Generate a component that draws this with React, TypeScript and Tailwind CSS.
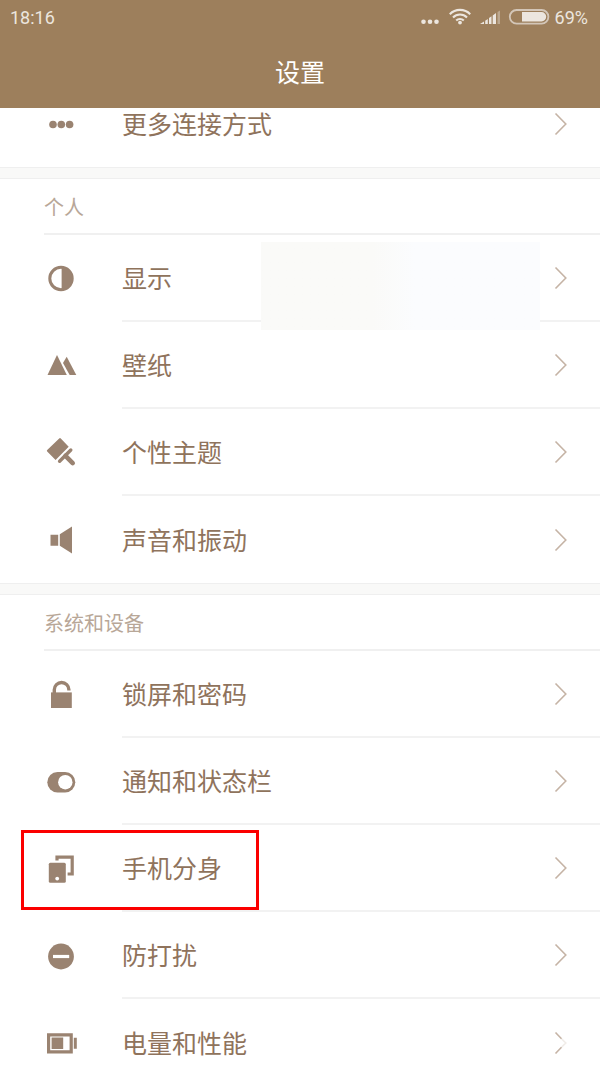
import type { ReactNode } from 'react';

interface SettingItem {
    label: string;
    icon: ReactNode;
    marked?: boolean;
    covered?: boolean;
    faded?: boolean;
}

interface SectionProps {
    title: string;
    items: SettingItem[];
}

const moreIcon = (
    <>
        <circle cx="8" cy="16.5" r="3.8" />
        <circle cx="16.3" cy="16.5" r="3.8" />
        <circle cx="24.6" cy="16.5" r="3.8" />
    </>
);

const displayIcon = (
    <>
        <circle cx="16" cy="15.5" r="11.2" fill="none" stroke="currentColor" strokeWidth="3" />
        <path d="M16.6 4.5a11 11 0 0 1 0 22z" />
    </>
);

const wallpaperIcon = (
    <>
        <path d="M2.5 25 12 5l9.8 20z" />
        <path d="M18 13.1 21.7 6.8 31.3 25h-6.6z" />
    </>
);

const themeIcon = (
    <>
        <path d="M14.2 1.4q.8-.8 1.6 0l7.9 8.4L10.6 23 2.2 14.6q-.8-.8 0-1.6z" />
        <path d="M25.8 13 14.6 24.3" fill="none" stroke="currentColor" strokeWidth="3.4" strokeLinecap="round" />
        <path d="m20.5 18.8 7.2 7.3" fill="none" stroke="currentColor" strokeWidth="4.6" strokeLinecap="round" />
    </>
);

const soundIcon = (
    <>
        <path d="M5.5 10.7h7.7v11.1H5.5zM14.8 10.2 27 2.6v26.8l-12.2-7.7z" />
    </>
);

const lockIcon = (
    <>
        <path d="M6 13.4h20.8V29H6z" />
        <path d="M9.3 14.4v-3.6a7.3 7.3 0 0 1 14.6 0v.8" fill="none" stroke="currentColor" strokeWidth="3.4" />
    </>
);

const toggleIcon = (
    <>
        <rect x="2.3" y="6" width="28" height="20.4" rx="10.2" />
        <circle cx="20.3" cy="16.2" r="7.2" fill="#fff" />
    </>
);

const cloneIcon = (
    <>
        <path d="M12 7.6V4.2h15.2V21h-4.6" fill="none" stroke="currentColor" strokeWidth="3.2" />
        <rect x="3.8" y="9.8" width="17" height="20" rx="1.5" />
        <circle cx="12.2" cy="25.6" r="1.9" fill="#fff" />
    </>
);

const disturbIcon = (
    <>
        <circle cx="16" cy="16.5" r="12.9" />
        <path d="M8 14.9h16.2v3.2H8z" fill="#fff" />
    </>
);

const batteryIcon = (
    <>
        <path d="M3.6 7.8h22.6v17H3.6z" fill="none" stroke="currentColor" strokeWidth="3.2" />
        <path d="M6.6 10.5h11.6v11.6H6.6zM28.8 10.7h3v11h-3z" />
    </>
);

const personalItems: SettingItem[] = [
    { label: '显示', icon: displayIcon, covered: true },
    { label: '壁纸', icon: wallpaperIcon },
    { label: '个性主题', icon: themeIcon },
    { label: '声音和振动', icon: soundIcon },
];

const systemItems: SettingItem[] = [
    { label: '锁屏和密码', icon: lockIcon },
    { label: '通知和状态栏', icon: toggleIcon },
    { label: '手机分身', icon: cloneIcon, marked: true },
    { label: '防打扰', icon: disturbIcon },
    { label: '电量和性能', icon: batteryIcon, faded: true },
];

const StatusBar = () => (
    <div className="flex h-9 items-center justify-between pr-3 pl-2.5 font-[Roboto,sans-serif] text-lg text-[#ece6df]">
        <span>18:16</span>
        <div className="flex items-center">
            <svg className="mr-2 h-5 w-5" viewBox="0 0 20 20" fill="currentColor" aria-hidden="true">
                <circle cx="3.5" cy="13.7" r="2.3" />
                <circle cx="10" cy="13.7" r="2.3" />
                <circle cx="16.5" cy="13.7" r="2.3" />
            </svg>
            <svg className="mr-2 h-5 w-6" viewBox="0 0 24 20" fill="none" stroke="currentColor" strokeWidth="2.1" aria-hidden="true">
                <path d="M1.8 6.2a14.2 14.2 0 0 1 20.4 0M5 9.5a9.8 9.8 0 0 1 14 0M8.2 12.6a5.4 5.4 0 0 1 7.6 0" />
                <circle cx="12" cy="14.6" r="1.9" fill="currentColor" stroke="none" />
            </svg>
            <svg className="mr-2 h-5 w-5" viewBox="0 0 20 20" fill="currentColor" aria-hidden="true">
                <path d="M0 16l4-2.6V16zM5.2 12.7l2.6-1.8V16H5.2zM9 10l2.5-1.8V16H9zM12.7 7.4 16 5v11h-3.3z" />
                <path d="M17.5 4 20 2.5V16h-2.5z" opacity=".4" />
            </svg>
            <svg className="mr-[5px] h-5 w-[42px]" viewBox="0 0 42 20" aria-hidden="true">
                <rect x="1.8" y="2" width="38.6" height="13.6" rx="6.8" fill="none" stroke="#d3c6b8" strokeWidth="1.8" />
                <path d="M14 4.1h19.5a4.7 4.7 0 0 1 0 9.4H14z" fill="#ece6df" />
            </svg>
            <span>69%</span>
        </div>
    </div>
);

const SettingRow = ({ item, last }: { item: SettingItem; last?: boolean }) => (
    <li className="relative">
        <button type="button" className="flex h-[87px] w-full items-center gap-[45px] pl-[45px] text-left">
            <svg className="size-8 shrink-0 text-[#9a8371]" viewBox="0 0 32 32" fill="currentColor" aria-hidden="true">
                {item.icon}
            </svg>
            <span className={`flex h-full flex-1 items-center justify-between pr-8 ${last ? '' : 'border-b-2 border-[#f2f2f2]'}`}>
                <span className="text-[25px] leading-none text-[#8f735c]">{item.label}</span>
                <svg className="h-6 w-4" viewBox="0 0 16 24" fill="none" stroke="#c5b3a5" strokeWidth="1.6" aria-hidden="true">
                    {item.faded ? (
                        <>
                            <path d="m3.5 1.5 6 6.2M3.5 22.5l6-6.2" />
                            <path d="m9.5 7.7 4.3 4.3-4.3 4.3" opacity=".25" />
                        </>
                    ) : (
                        <path d="M3.5 1.5 13.8 12 3.5 22.5" />
                    )}
                </svg>
            </span>
        </button>
        {item.covered && (
            <div className="absolute top-[7px] right-[60px] left-[261px] z-10 h-[88px] bg-linear-to-r from-[#fafaf8] from-40% to-[#fbfcfe] to-55%" />
        )}
        {item.marked && (
            <div className="absolute top-[5px] left-[21px] h-20 w-[238px] border-3 border-[#fb0000]" />
        )}
    </li>
);

const Divider = () => <div className="h-3 border-y border-[#efefef] bg-[#f9f9f8]" />;

const Section = ({ title, items }: SectionProps) => (
    <section>
        <h2 className="ml-11 flex h-14 items-center border-b-2 border-[#f0f0f0] pt-0.5 text-xl text-[#b8a798]">
            {title}
        </h2>
        <ul>
            {items.map((item, i) => (
                <SettingRow key={item.label} item={item} last={i === items.length - 1} />
            ))}
        </ul>
    </section>
);

export default function App() {
    return (
        <div className="flex h-screen flex-col overflow-hidden bg-white font-['Noto_Sans_CJK_SC',sans-serif]">
            <header className="z-20 h-27 shrink-0 bg-[#9d7f5c]">
                <StatusBar />
                <h1 className="flex h-[72px] items-center justify-center text-[25px] text-white">设置</h1>
            </header>

            <main className="min-h-0 flex-1">
                {/* список немного прокручен, первая строка частично под шапкой */}
                <ul className="-mt-7">
                    <SettingRow item={{ label: '更多连接方式', icon: moreIcon }} last />
                </ul>
                <Divider />
                <Section title="个人" items={personalItems} />
                <Divider />
                <Section title="系统和设备" items={systemItems} />
            </main>
        </div>
    );
}
